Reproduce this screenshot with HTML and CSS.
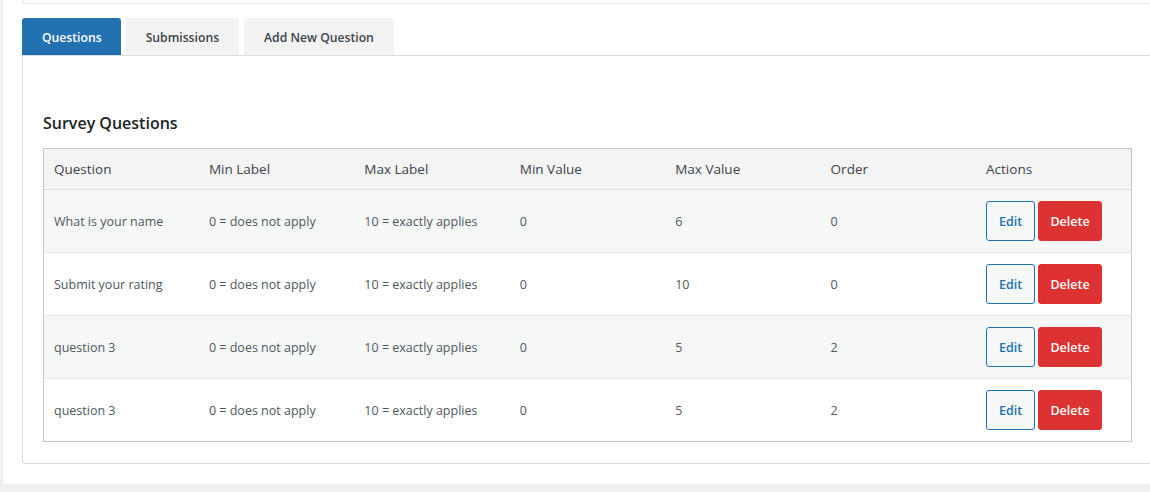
FILE: index.html
```html
<!DOCTYPE html>
<html>
<head>
<meta charset="utf-8">
<link rel="stylesheet" href="styles.css">
</head>
<body>
<div class="wrap">
  <div class="topbox"></div>
  <nav class="tabs">
    <a class="tab active">Questions</a>
    <a class="tab">Submissions</a>
    <a class="tab">Add New Question</a>
  </nav>
  <div class="panel">
    <h2 class="title">Survey Questions</h2>
    <table class="qtable">
      <thead>
        <tr><th>Question</th><th>Min Label</th><th>Max Label</th><th>Min Value</th><th>Max Value</th><th>Order</th><th>Actions</th></tr>
      </thead>
      <tbody>
        <tr><td>What is your name</td><td>0 = does not apply</td><td>10 = exactly applies</td><td>0</td><td>6</td><td>0</td><td class="actions"><button class="btn edit">Edit</button><button class="btn del">Delete</button></td></tr>
        <tr><td>Submit your rating</td><td>0 = does not apply</td><td>10 = exactly applies</td><td>0</td><td>10</td><td>0</td><td class="actions"><button class="btn edit">Edit</button><button class="btn del">Delete</button></td></tr>
        <tr><td>question 3</td><td>0 = does not apply</td><td>10 = exactly applies</td><td>0</td><td>5</td><td>2</td><td class="actions"><button class="btn edit">Edit</button><button class="btn del">Delete</button></td></tr>
        <tr><td>question 3</td><td>0 = does not apply</td><td>10 = exactly applies</td><td>0</td><td>5</td><td>2</td><td class="actions"><button class="btn edit">Edit</button><button class="btn del">Delete</button></td></tr>
      </tbody>
    </table>
  </div>
</div>
</body>
</html>
```
FILE: styles.css
```css
html, body {
  margin: 0;
  padding: 0;
  background: #f0f0f1;
  overflow: hidden;
  font-family: "Open Sans", "Noto Sans", sans-serif;
  color: #3c434a;
}
.wrap {
  margin-left: 3px;
  width: 1170px;
  height: 484px;
  background: #fff;
  box-shadow: 0 1px 2px rgba(0,0,0,0.08);
  padding-left: 19px;
  box-sizing: border-box;
}
.topbox {
  height: 3px;
  width: 1140px;
  border: 1px solid #e2e4e7;
  border-top: none;
  border-radius: 0 0 0 4px;
}
.tabs {
  display: flex;
  gap: 5px;
  margin-top: 14px;
  width: 1140px;
  border-bottom: 1px solid #dcdcde;
}
.tab {
  display: block;
  height: 37px;
  line-height: 39px;
  padding: 0 20px 0 20px;
  background: #f3f3f3;
  border-radius: 3px 3px 0 0;
  font-size: 12.2px;
  font-weight: 600;
  color: #3c434a;
}
.tab.active {
  padding: 0 19px 0 20px;
  background: #2271b1;
  color: #fff;
}
.panel {
  width: 1131px;
  border: 1px solid #dcdcde;
  border-top: none;
  border-radius: 0 0 0 4px;
  padding: 54px 20px 21px 20px;
  box-sizing: border-box;
}
.title {
  margin: 0 0 12px 0;
  font-size: 16px;
  line-height: 26px;
  font-weight: 600;
  color: #1d2327;
}
.qtable {
  width: 1089px;
  border-collapse: collapse;
  table-layout: fixed;
  border: 1px solid #c3c4c7;
}
.qtable th {
  background: #f4f4f4;
  height: 40px;
  text-align: left;
  font-weight: 400;
  font-size: 13.5px;
  padding: 0 10px;
  border-bottom: 1px solid #dcdcde;
  color: #3c434a;
}
.qtable td {
  height: 62px;
  padding: 0 10px;
  font-size: 12.5px;
  color: #50575e;
  border-bottom: 1px solid #e8e8e8;
}
.qtable tbody tr:nth-child(odd) td {
  background: #f6f7f7;
}
.qtable tbody tr:last-child td {
  border-bottom: none;
}
.actions {
  white-space: nowrap;
}
.btn {
  height: 40px;
  vertical-align: middle;
  font-family: inherit;
  font-size: 12.5px;
  font-weight: 600;
  border-radius: 3px;
  cursor: pointer;
}
.btn.edit {
  width: 49px;
  background: #f6f7f7;
  border: 1px solid #2271b1;
  color: #2271b1;
  margin-right: 3px;
}
.btn.del {
  width: 64px;
  background: #dc3232;
  border: 1px solid #dc3232;
  color: #fff;
}
```
